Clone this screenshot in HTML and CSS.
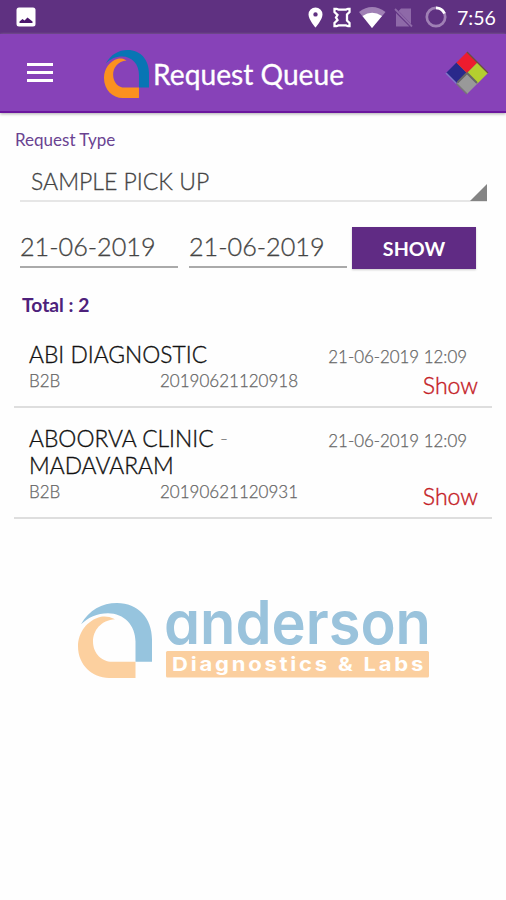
FILE: index.html
```html
<!DOCTYPE html>
<html lang="en">
<head>
<meta charset="utf-8">
<title>Request Queue</title>
<link rel="stylesheet" href="styles.css">
</head>
<body>
<svg class="defs" aria-hidden="true">
  <symbol id="mark" viewBox="0 0 74 74" preserveAspectRatio="none">
    <path class="blue" d="M3 21C11 7 24 0 39 0C60 0 74 15 74 36V58H57.5V38C57.5 22 46 10 30 10C19 10 10 14 3 21Z"/>
    <path class="orange" d="M37 16C31 13 27 13 23 13.5C9 17 0 29 0 43C0 61 14 74 31 74H57.5V58H34C24 58 15 50 15 38C15 27 23 17 37 16Z"/>
  </symbol>
</svg>
<header>
  <div class="status">
    <svg class="photo" width="20" height="20" viewBox="0 0 20 20"><rect x=".5" y=".5" width="19" height="19" rx="2.5" fill="#fff"/><path d="M3.500 16V14.500L6.500 12L8.500 13.500L11.500 10.500L16.500 14.500V16Z" fill="#4b176d"/></svg>
    <svg class="tray" width="119" height="24" viewBox="306 5 119 24">
      <path fill="#fff" fill-rule="evenodd" d="M315.500 7.500A7 7 0 0 0 308.500 14.500C308.500 19.500 315.500 27.500 315.500 27.500S322.500 19.500 322.500 14.500A7 7 0 0 0 315.500 7.500ZM315.500 12.200A2.200 2.200 0 1 1 315.500 16.600A2.200 2.200 0 0 1 315.500 12.200Z"/>
      <path fill="none" stroke="#fff" stroke-width="2.300" d="M334.500 8.800H336.500L338.500 9.600H346L348 8.800H349.500V12L347 14.500V20.500L349.500 23V26.200H348L346 25.400H338.500L336.500 26.200H334.500V23L337.500 20L336 17.500L337.500 15L334.500 12Z"/>
      <path fill="#a080b5" d="M359 12Q372 2 385.500 12L372 28Z"/>
      <path fill="#fff" d="M362.500 16Q372 9.500 382 16L372 28Z"/>
      <path fill="#8e69a8" d="M401 8.500H411V24L398.500 11ZM396 13L409.500 26.500H396Z"/>
      <path stroke="#8e69a8" stroke-width="1.800" d="M395 9L412 26.500"/>
    </svg>
    <svg class="ring" width="22" height="22" viewBox="0 0 22 22"><circle cx="11" cy="11" r="9.200" fill="none" stroke="#a080b5" stroke-width="2.700"/><path d="M11 1.800A9.200 9.200 0 0 1 19.500 7.500" fill="none" stroke="#fff" stroke-width="2.700"/></svg>
    <span class="clock">7:56</span>
  </div>
  <div class="appbar">
    <div class="menu"><i></i><i></i><i></i></div>
    <svg class="logo"><use href="#mark"/></svg>
    <h1>Request Queue</h1>
    <svg class="gem" width="44" height="44" viewBox="0 0 44 44"><path fill="#29298b" d="M11.500 11.500L22 22L11.500 32.500L1 22Z"/><path fill="#999" d="M22 22L32.500 32.500L22 43L11.500 32.500Z"/><path fill="#ed1c2e" d="M22 1L32.500 11.500L22 22L11.500 11.500Z"/><path fill="#b4cf2f" d="M32.500 11.500L43 22L32.500 32.500L22 22Z"/><path fill="none" stroke="#69503f" stroke-width="1.300" d="M22 1L43 22"/><path fill="none" stroke="#666" stroke-width="2" d="M12.500 31.500L22 22L32 32"/><path fill="none" stroke="#b33a48" stroke-width="1" d="M11.500 11.500L22 22"/><path fill="none" stroke="#8177c8" stroke-width="1.500" d="M1 22L11.500 32.500"/><path fill="none" stroke="#777" stroke-width="1.500" d="M11.500 32.500L22 43"/></svg>
  </div>
</header>
<main>
  <label class="type-label">Request Type</label>
  <div class="select"><span>SAMPLE PICK UP</span><i class="corner"></i></div>
  <div class="filters">
    <div class="date"><span>21-06-2019</span></div>
    <div class="date"><span>21-06-2019</span></div>
    <button><span>SHOW</span></button>
  </div>
  <div class="total">Total : 2</div>
  <section class="list">
    <article>
      <div class="top"><h2>ABI DIAGNOSTIC</h2><time>21-06-2019 12:09</time></div>
      <div class="bottom"><span class="kind">B2B</span><span class="code">20190621120918</span><a>Show</a></div>
    </article>
    <article>
      <div class="top"><h2>ABOORVA CLINIC <span class="dash">-</span> MADAVARAM</h2><time>21-06-2019 12:09</time></div>
      <div class="bottom"><span class="kind">B2B</span><span class="code">20190621120931</span><a>Show</a></div>
    </article>
  </section>
  <div class="brand">
    <svg class="brand-mark"><use href="#mark"/></svg>
    <svg class="brand-name" width="264" height="82" viewBox="0 0 264 82">
      <text class="name" x="-2" y="46" textLength="267" lengthAdjust="spacingAndGlyphs">anderson</text>
      <rect x="0" y="53" width="263" height="26.500" rx="1.500" fill="#fbcf9f"/>
      <text class="tag" x="6" y="72.500" textLength="254" lengthAdjust="spacingAndGlyphs">Diagnostics &amp; Labs</text>
    </svg>
  </div>
</main>
</body>
</html>
```

FILE: styles.css
```css
* { box-sizing: border-box; }
body { margin: 0; width: 506px; height: 900px; overflow: hidden; background: #fefefe; font-family: Lato, sans-serif; }
svg { display: block; flex: none; }
.defs { width: 0; height: 0; position: absolute; }
.status { height: 34px; background: #5f3181; display: flex; align-items: flex-start; padding-left: 16px; color: #fff; }
.photo { margin-top: 7px; }
.tray { margin: 5px 0 0 270px; }
.ring { margin: 6px 0 0 0; }
.clock { margin-left: 10px; font-size: 19.5px; line-height: 35px; }
.appbar { height: 79px; background: #8742b8; border-bottom: 2px solid #6b169e; box-shadow: 0 1px 3px #aaa; display: flex; align-items: flex-start; padding: 0 17px 0 27px; }
.menu { width: 26px; margin-top: 29px; display: flex; flex-direction: column; gap: 5px; }
.menu i { height: 3px; background: #fff; }
.logo { width: 45px; height: 48px; margin: 16px 0 0 51px; }
.blue { fill: #0875b4; }
.orange { fill: #fb911f; }
h1 { margin: 20px 0 0 4px; font-size: 28.2px; font-weight: 400; line-height: 41px; color: #fff; white-space: nowrap; -webkit-text-stroke: .3px #fff; }
.gem { margin: 17px 0 0 auto; }
main { padding: 0 14px; }
.type-label { display: block; margin: 16px 0 0 1px; font-size: 17px; line-height: 21px; height: 20px; color: #6a4391; }
.select { height: 52px; margin: 1px 5px 0 6px; border-bottom: 2px solid #e6e6e6; padding: 18px 0 0 11px; font-size: 23px; line-height: 27px; font-weight: 300; color: #444; -webkit-text-stroke: .3px #444; position: relative; }
.corner { position: absolute; right: 0; bottom: -1px; width: 17px; height: 17px; background: #848484; clip-path: polygon(100% 0, 100% 100%, 0 100%); }
.filters { display: flex; margin: 25px 0 0 6px; align-items: flex-start; height: 43px; }
.date { width: 158px; height: 41px; border-bottom: 2px solid #aaa; margin-right: 11px; font-size: 25.2px; line-height: 39px; font-weight: 300; color: #444; -webkit-text-stroke: .3px #444; white-space: nowrap; }
.date + .date { margin-right: 5px; }
button { width: 124px; height: 42px; border: 0; border-radius: 0; padding: 0; background: #602b84; color: #fff; font: 700 19.7px/44px Lato, sans-serif; box-shadow: 0 1px 2px #ccc; }
.total { margin: 22px 0 0 8px; font-size: 19.3px; line-height: 26px; font-weight: 700; color: #4d217b; }
.list { margin-top: 23px; }
article { padding: 0 14px 0 15px; border-bottom: 2px solid #dedede; }
article:first-child { height: 67px; }
article + article { height: 111px; padding-top: 17px; }
.top { display: flex; justify-content: space-between; }
h2 { margin: 0; width: 230px; font-size: 22.8px; line-height: 27px; font-weight: 300; color: #111; -webkit-text-stroke: .35px #111; }
.dash { color: #888; -webkit-text-stroke: 0; }
time { margin: 5px 11px 0 0; font-size: 16.9px; line-height: 22px; height: 22px; font-weight: 300; color: #666; -webkit-text-stroke: .25px #666; white-space: nowrap; }
.bottom { display: flex; font-size: 17px; line-height: 26px; font-weight: 300; color: #666; -webkit-text-stroke: .25px #666; }
.kind { width: 131px; }
.bottom a { margin: 4px 0 0 auto; color: #c42026; font-size: 23.1px; -webkit-text-stroke: .4px #c42026; }
.brand { display: flex; margin: 79px 0 0 64px; }
.brand-mark { width: 74px; height: 75px; margin-top: 5px; opacity: .42; }
.brand-name { margin-left: 14px; overflow: visible; }
.name { font: 600 60px Inter, sans-serif; font-feature-settings: "cv11"; fill: #9ac3dc; }
.tag { font: 700 19px Inter, sans-serif; letter-spacing: 2.4px; fill: #fff; }
```
